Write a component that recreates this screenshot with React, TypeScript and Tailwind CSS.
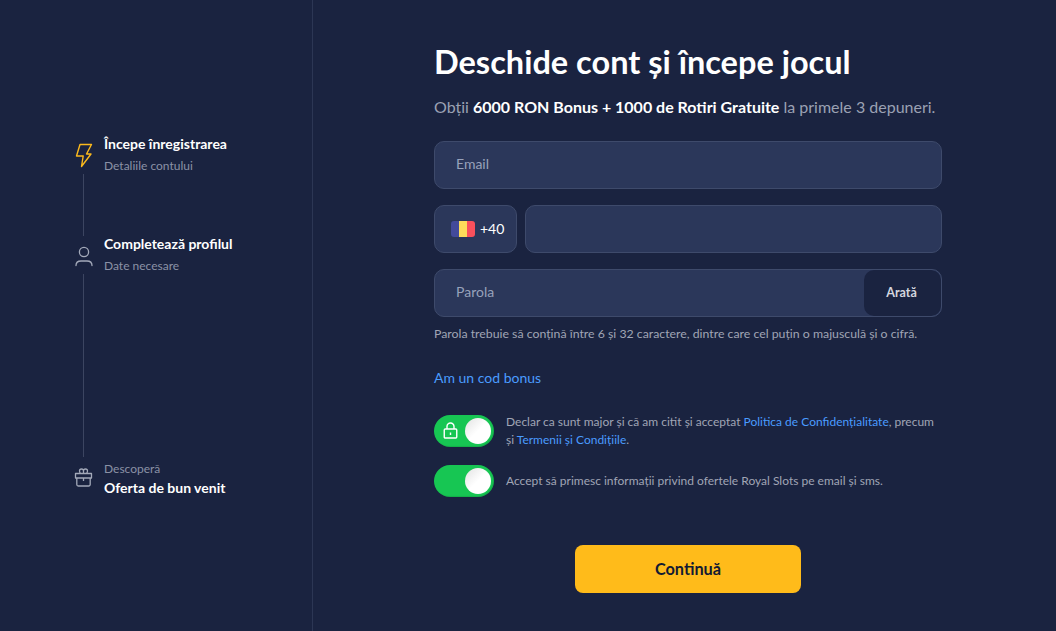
const inputBox = 'h-12 rounded-[10px] border border-[#3e4a6b] bg-[#2b375a]'

function BoltIcon() {
  return (
    <svg aria-hidden="true" className="h-[26px] w-[18px]" fill="none" stroke="#fbb91c" strokeLinejoin="round" strokeWidth="1.4" viewBox="0 0 18 26">
      <path d="M5 2.500h11.500l-5 9.500h4.500L6.500 24.500l1.700-10.500H1.500L5 2.500z" />
    </svg>
  )
}

function UserIcon() {
  return (
    <svg aria-hidden="true" className="h-[22px] w-[18px]" fill="none" stroke="#a3a9b9" strokeLinecap="round" strokeWidth="1.3" viewBox="0 0 18 22">
      <circle cx="9" cy="6" r="4.600" />
      <path d="M1 19.500c0-3 2.400-4.500 5-4.500h6c2.600 0 5 1.500 5 4.500" />
    </svg>
  )
}

function GiftIcon() {
  return (
    <svg aria-hidden="true" className="h-[22px] w-[19px]" fill="none" stroke="#a3a9b9" strokeLinejoin="round" strokeWidth="1.3" viewBox="0 0 19 22">
      <path d="M1.500 7.500h16v4.500h-16zM2.800 12v6.500a1.500 1.500 0 0 0 1.500 1.500h10.400a1.500 1.500 0 0 0 1.500-1.500V12M9.500 12v3" />
      <path d="M9.500 7.500V5a2 2 0 1 0-4 0c0 1 .5 2 1 2.500M9.500 5a2 2 0 1 1 4 0c0 1-.5 2-1 2.500" />
    </svg>
  )
}

function LockIcon() {
  return (
    <svg aria-hidden="true" className="absolute left-[9px] top-[7px] h-[17px] w-[15px]" fill="none" stroke="#ffffff" strokeLinejoin="round" strokeWidth="1.400" viewBox="0 0 15 17">
      <rect height="9" rx="1" width="12.500" x="1.250" y="7" />
      <path d="M4 7V4.500a3.500 3.500 0 0 1 7 0V7M7.500 10.500v2.500" />
    </svg>
  )
}

function Toggle({ locked }: { locked?: boolean }) {
  return (
    <div className="relative h-8 w-[60px] shrink-0 rounded-full bg-[#17c653] shadow-[inset_-1px_-1px_1px_rgba(0,0,0,0.12)]">
      {locked && <LockIcon />}
      <div className="absolute right-[3px] top-[3px] h-[26px] w-[26px] rounded-full bg-gradient-to-br from-[#e2e2e2] via-white to-white" />
    </div>
  )
}

export default function App() {
  return (
    <div className="flex h-[631px] w-[1056px] overflow-hidden bg-[#1a2340] font-['Lato',sans-serif] text-white">
      <aside className="flex w-[313px] shrink-0 flex-col border-r border-[#2c3654] pl-[75px] pt-[134px]">
        <div className="flex gap-[12px]">
          <div className="flex w-[17px] flex-col items-center pt-[8px]">
            <BoltIcon />
            <div className="mt-[6px] h-[62px] w-px bg-[#3c4561]" />
          </div>
          <div>
            <div className="text-[14px] font-bold leading-[20px]">Începe înregistrarea</div>
            <div className="mt-[2px] text-[12px] leading-[20px] text-[#8b92a6]">Detaliile contului</div>
          </div>
        </div>
        <div className="-mt-[2px] flex gap-[12px]">
          <div className="flex w-[17px] flex-col items-center pt-[12px]">
            <UserIcon />
            <div className="mt-[6px] h-[183px] w-px bg-[#3c4561]" />
          </div>
          <div>
            <div className="text-[14px] font-bold leading-[20px]">Completează profilul</div>
            <div className="mt-[2px] text-[12px] leading-[20px] text-[#8b92a6]">Date necesare</div>
          </div>
        </div>
        <div className="mt-[3px] flex gap-[12px]">
          <div className="flex w-[17px] flex-col items-center pt-[6px]">
            <GiftIcon />
          </div>
          <div>
            <div className="text-[12px] leading-[18px] text-[#8b92a6]">Descoperă</div>
            <div className="text-[14px] font-bold leading-[20px]">Oferta de bun venit</div>
          </div>
        </div>
      </aside>

      <main className="ml-[121px] flex w-[508px] flex-col pt-[39px]">
        <h1 className="text-[32.500px] font-bold leading-[46px]">Deschide cont și începe jocul</h1>
        <p className="mt-[10px] text-[16px] leading-[24px] text-[#9ba1b3]">
          Obții <span className="font-bold text-white">6000 RON Bonus + 1000 de Rotiri Gratuite</span> la primele 3 depuneri.
        </p>

        <div className={`mt-[22px] flex items-center px-[21px] pb-[4px] text-[14px] text-[#98a2bb] ${inputBox}`}>Email</div>

        <div className="mt-[16px] flex gap-2">
          <div className={`flex w-[83px] items-center gap-[5px] pl-[16px] text-[14px] ${inputBox}`}>
            <div className="flex h-4 w-6 overflow-hidden rounded-[3px]">
              <div className="flex-1 bg-[#434a9a]" />
              <div className="flex-1 bg-[#fedc5a]" />
              <div className="flex-1 bg-[#f9505c]" />
            </div>
            <span className="pb-[2px]">+40</span>
          </div>
          <div className={`flex-1 ${inputBox}`} />
        </div>

        <div className={`mt-[16px] flex items-center justify-between overflow-hidden pl-[21px] text-[14px] text-[#98a2bb] ${inputBox}`}>
          <span className="pb-[4px]">Parola</span>
          <button className="flex h-full w-[77px] items-center justify-center rounded-[10px] bg-[#1a2340] pr-[2px] text-[12.500px] font-bold text-[#d5d7df]" type="button">
            Arată
          </button>
        </div>

        <p className="mt-[8px] text-[12.300px] leading-[18px] text-[#a0a5b5]">
          Parola trebuie să conțină între 6 și 32 caractere, dintre care cel puțin o majusculă și o cifră.
        </p>

        <a className="mt-[25px] text-[14px] leading-[20px] text-[#4a9cff]" href="#">Am un cod bonus</a>

        <div className="mt-[25px] flex items-center gap-3">
          <Toggle locked />
          <p className="text-[12px] leading-[18px] text-[#a0a5b5]">
            Declar ca sunt major și că am citit și acceptat <a className="text-[#4a9cff]" href="#">Politica de Confidențialitate</a>, precum
            <br />
            și <a className="text-[#4a9cff]" href="#">Termenii și Condițiile</a>.
          </p>
        </div>
        <div className="mt-[16px] flex items-center gap-3">
          <Toggle />
          <p className="text-[12px] leading-[18px] text-[#a0a5b5]">
            Accept să primesc informații privind ofertele Royal Slots pe email și sms.
          </p>
        </div>

        <button className="mx-auto mt-[48px] h-12 w-[226px] rounded-[8px] bg-[#ffbb1a] text-[16.300px] font-bold text-[#121a33]" type="button">
          Continuă
        </button>
      </main>
    </div>
  )
}
